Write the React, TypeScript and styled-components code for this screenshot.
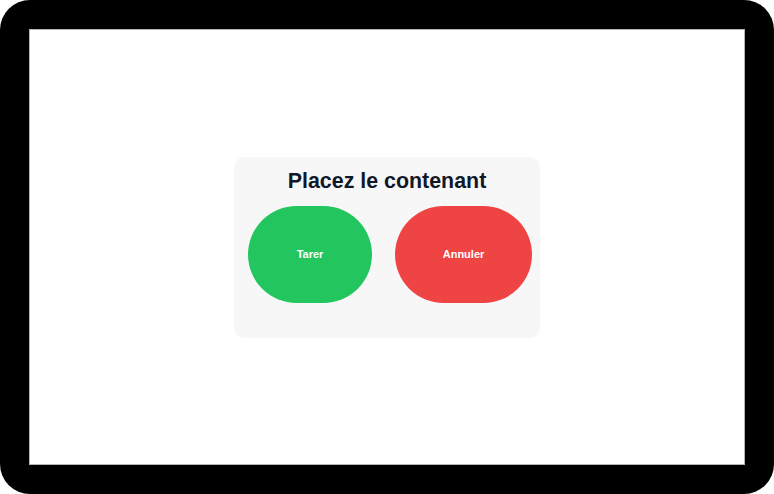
import React from "react";
import styled, { createGlobalStyle } from "styled-components";

const Global = createGlobalStyle`
  html, body { margin: 0; padding: 0; background: #ffffff; }
  * { box-sizing: border-box; }
`;

const Frame = styled.div`
  width: 774px;
  height: 494px;
  background: #000000;
  border-radius: 30px;
  padding: 29px;
  display: flex;
`;

const Screen = styled.div`
  flex: 1;
  background: #ffffff;
  border: 1px solid #b5b5b5;
  display: flex;
  align-items: center;
  justify-content: center;
`;

const Card = styled.div`
  width: 306px;
  height: 181px;
  background: #f7f7f7;
  border-radius: 10px;
  padding: 12px 8px 0 14px;
  display: flex;
  flex-direction: column;
  align-items: stretch;
`;

const Title = styled.h1`
  margin: 0;
  font-family: "Liberation Sans", Arial, sans-serif;
  font-weight: 700;
  font-size: 21.4px;
  line-height: 25px;
  color: #111827;
  text-align: center;
  padding-right: 6px;
`;

const Row = styled.div`
  display: flex;
  gap: 23px;
  margin-top: 12px;
`;

const Pill = styled.button<{ $bg: string; $w: number }>`
  width: ${(p) => p.$w}px;
  height: 97px;
  border: none;
  border-radius: 9999px;
  background: ${(p) => p.$bg};
  color: #ffffff;
  font-family: "Liberation Sans", Arial, sans-serif;
  font-weight: 700;
  font-size: 11px;
  display: flex;
  align-items: center;
  justify-content: center;
  padding: 0;
  cursor: pointer;
`;

export default function App() {
  return (
    <>
      <Global />
      <Frame>
        <Screen>
          <Card>
            <Title>Placez le contenant</Title>
            <Row>
              <Pill $bg="#22c55e" $w={124}>Tarer</Pill>
              <Pill $bg="#ef4444" $w={137}>Annuler</Pill>
            </Row>
          </Card>
        </Screen>
      </Frame>
    </>
  );
}
